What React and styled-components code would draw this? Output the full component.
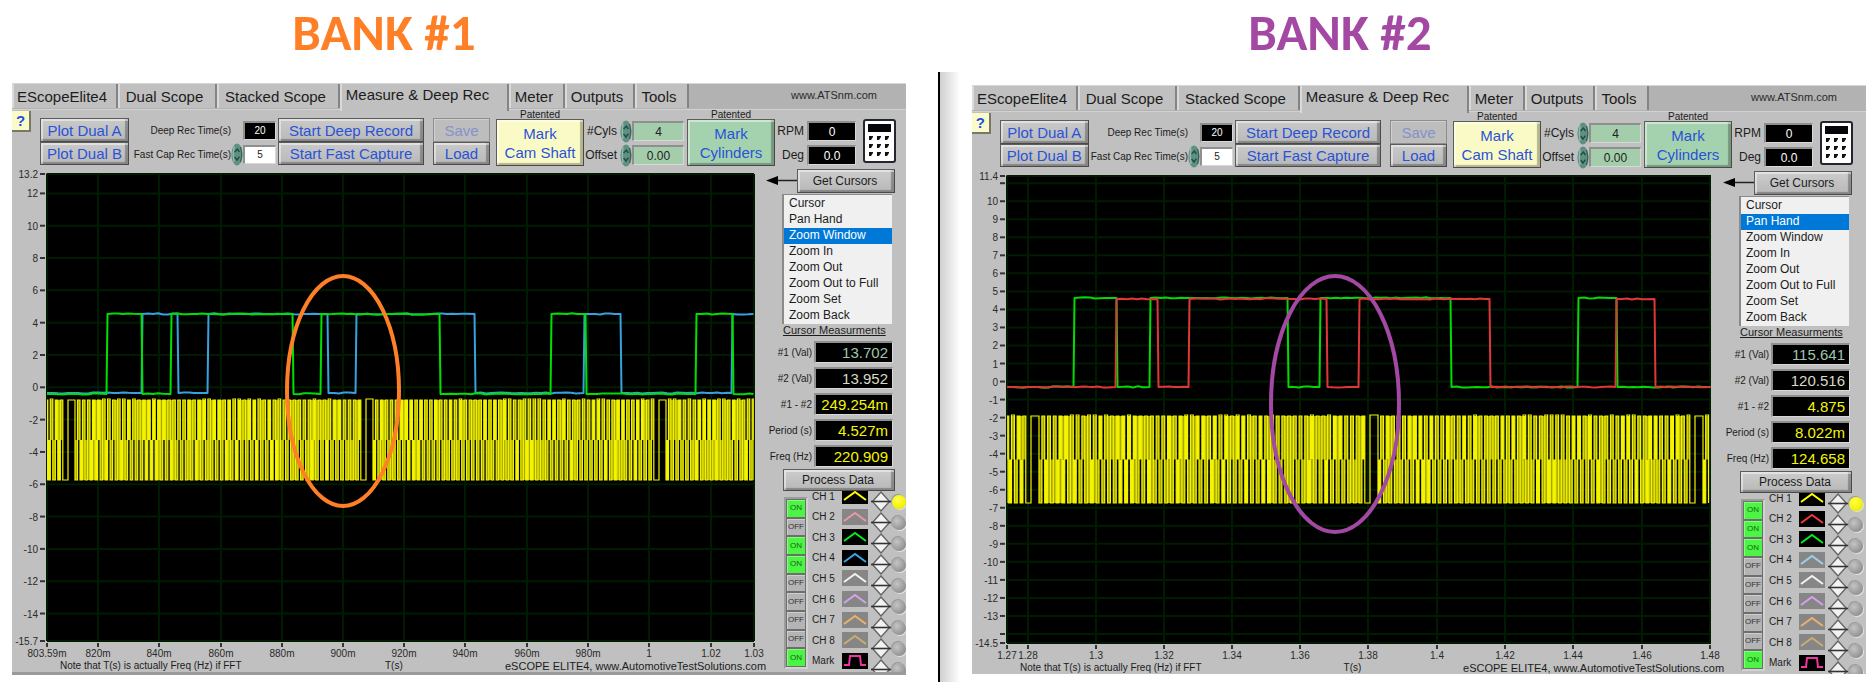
import React, { useId, useState } from "react";
import styled, { createGlobalStyle, css } from "styled-components";

const GlobalStyle = createGlobalStyle`
  * { box-sizing: border-box; }
  body {
    margin: 0;
    background: #fff;
    color: #1c1c1c;
    font-family: "Liberation Sans", Arial, sans-serif;
  }
  button, input, select { font-family: inherit; margin: 0; }
`;

/* ---------- page ---------- */

const Page = styled.main`
  display: flex;
  min-height: 100vh;
  padding: 0 8px 0 12px;
`;

const Bank = styled.section`
  flex: 1 1 0;
  min-width: 0;
`;

const Divider = styled.div`
  flex: 0 0 34px;
  margin: 72px 0 0 32px;
  border-left: 2px solid #000;
  background: linear-gradient(90deg, #cfcfcf, #fff 20px);
`;

const Title = styled.h1`
  margin: 0;
  padding: 6px ${(p) => p.$right}px 0 0;
  height: ${(p) => p.$height}px;
  font: 900 51px/54px Carlito, Calibri, Lato, sans-serif;
  text-align: center;
  white-space: nowrap;
  color: ${(p) => p.$color};
`;

const Panel = styled.div`
  overflow: hidden;
  background: #c0c0c0;
  border-bottom: ${(p) => (p.$edge ? "3px solid #9a9a9a" : "0")};
`;

/* ---------- tabs ---------- */

const TabBar = styled.nav`
  display: flex;
  align-items: flex-start;
  height: 27px;
  background: linear-gradient(#b2b2b2 25px, #d2d2d2 25px);
  border-top: 1px solid #d6d6d6;
`;

const Tab = styled.button`
  height: ${(p) => (p.$active ? 27 : 24)}px;
  padding: ${(p) => (p.$active ? "0 16px 6px 2px" : "0 8px 0 2px")};
  border: 0;
  border-left: 2px solid #dadada;
  border-right: 2px solid #848484;
  background: #c0c0c0;
  color: #1c1c1c;
  font-size: 15px;
  white-space: nowrap;
  flex: 0 0 ${(p) => p.$width}px;
`;

const SiteLink = styled.a`
  margin: 5px 29px 0 auto;
  font-size: 11px;
  line-height: 12px;
  color: #2a2a2a;
  text-decoration: none;
`;

/* ---------- toolbar ---------- */

const Toolbar = styled.div`
  display: flex;
  align-items: flex-start;
  height: 59px;
  padding-right: ${(p) => 10 + p.$inset}px;
`;

const raised = css`
  border: 1px solid #5c5c5c;
  border-right-color: #4a4a4a;
  border-bottom-color: #4a4a4a;
  box-shadow: inset 2px 2px 0 rgba(255, 255, 255, 0.45), inset -3px -2px 1px rgba(0, 0, 0, 0.28);
`;

const HelpButton = styled.button`
  width: 19px;
  height: 21px;
  margin-top: 1px;
  padding: 0;
  border: solid #77776a;
  border-width: 0 2px 2px 0;
  background: #fbfbc8;
  color: #1f4fe0;
  font-size: 15px;
  font-weight: 700;
`;

const Stack = styled.div`
  display: grid;
  grid-template-rows: 24px 23px;
  flex: 0 0 ${(p) => p.$width}px;
  margin: 8px 0 0 ${(p) => p.$gap}px;
`;

const BlueButton = styled.button`
  ${raised}
  padding: 0;
  background: linear-gradient(#c9c9c9, #b9b9b9);
  color: #2953d6;
  font-size: 15px;
  white-space: nowrap;
  &:disabled {
    color: #8593c9;
    background: #bdbdbd;
    border-color: #8d8d8d;
    box-shadow: inset 1px 1px 0 #d0d0d0;
  }
`;

const MarkGroup = styled.div`
  flex: 0 0 88px;
  margin-left: ${(p) => p.$gap}px;
  text-align: center;
  font-size: 10px;
  line-height: 9px;
`;

const MarkButton = styled.button`
  ${raised}
  display: block;
  width: 100%;
  height: 47px;
  padding: 0;
  background: ${(p) => p.$color};
  color: #2953d6;
  font-size: 15px;
  line-height: 19px;
`;

const Settings = styled.div`
  display: grid;
  grid-template-columns: ${(p) => p.$columns};
  grid-template-rows: 24px 24px;
  align-items: center;
  justify-items: end;
  flex: ${(p) => (p.$width ? `0 0 ${p.$width}px` : "1 1 0")};
  margin: ${(p) => p.$top}px 0 0 2px;
  font-size: ${(p) => p.$size}px;
  white-space: nowrap;
`;

const Field = styled.input`
  width: ${(p) => p.$width}px;
  height: ${(p) => p.$height || 20}px;
  padding: 0;
  border: solid;
  border-width: 2px 1px 1px 2px;
  border-color: #8f8f8f #d8d8d8 #d8d8d8 #8f8f8f;
  background: ${(p) => p.$bg};
  color: ${(p) => p.$color};
  font-size: ${(p) => p.$size || 12}px;
  text-align: center;
`;

const SpinButton = styled.button`
  display: block;
  width: 12px;
  height: 23px;
  padding: 0;
  border: 0;
  background: none;
`;

const CalcButton = styled.button`
  flex: 0 0 33px;
  height: 44px;
  margin: 9px 0 0 7px;
  padding: 0;
  border: 0;
  background: none;
  svg { display: block; }
`;

function Spinner({ label }) {
  return (
    <SpinButton type="button" aria-label={label}>
      <svg width="12" height="23" viewBox="0 0 12 23">
        <ellipse cx="6" cy="11.5" rx="5.6" ry="11" fill="#5f9183" />
        <path d="M3 3 Q1.5 11 3 19" stroke="#93b9ab" strokeWidth="1.4" fill="none" />
        <path d="M3.6 9 L6.4 6 L8.4 9 M3.6 14 L6 17 L8.4 13.6" stroke="#234a40" strokeWidth="1.4" fill="none" />
        <path d="M9.6 4 Q12 11 9.6 19" stroke="#2f5a4e" strokeWidth="1" fill="none" />
      </svg>
    </SpinButton>
  );
}

function Calculator() {
  const keys = [0, 1, 2].flatMap((r) => [0, 1, 2].map((c) => [6 + c * 8, 17 + r * 8]));
  return (
    <svg width="33" height="44" viewBox="0 0 33 44">
      <rect x="1" y="1" width="31" height="42" rx="2" fill="#fff" stroke="#23262e" strokeWidth="2" />
      <rect x="5" y="5" width="23" height="8" fill="#05060a" />
      {keys.map(([x, y]) => (
        <path key={`${x}-${y}`} d={`M${x} ${y}h4v1l-2 3h-2z`} fill="#111" />
      ))}
    </svg>
  );
}

/* ---------- chart ---------- */

const Body = styled.div`
  display: flex;
  padding-right: ${(p) => p.$inset}px;
  height: ${(p) => p.$height}px;
`;

const ChartColumn = styled.div`
  flex: 1 1 0;
  min-width: 0;
  padding: 5px 0 0 35px;
`;

const Plot = styled.svg`
  display: block;
  width: 100%;
  height: 467px;
  overflow: visible;
  font-size: 10px;
  fill: #2a2a2a;
`;

const Caption = styled.div`
  display: grid;
  grid-template-columns: minmax(0, 325fr) minmax(0, 120fr) minmax(0, 249fr);
  align-items: center;
  padding: 19px 0 0 13px;
  font-size: 10px;
  line-height: 12px;
  white-space: nowrap;
`;

const CaptionLink = styled.a`
  font-size: 11px;
  color: #1c1c1c;
  text-decoration: none;
`;

const noise = (n) => {
  const v = Math.sin(n * 12.9898) * 43758.5453;
  return v - Math.floor(v);
};

/* Square trace that starts low and toggles at each edge. */
function squarePath(edges, low, high, end) {
  let x = 0;
  let up = false;
  let d = `M0 ${low}`;
  [...edges, end].forEach((edge, i) => {
    const level = up ? high : low;
    for (let px = x + 6; px < edge - 4; px += 5) {
      d += `L${px} ${(level + (noise(px + i) - 0.6) * 1.2).toFixed(1)}`;
    }
    d += `L${edge - 0.5} ${level}`;
    up = !up;
    if (i < edges.length) d += `L${edge + 0.5} ${up ? high : low}`;
    x = edge;
  });
  return d;
}

/* Crank wheel trace: a wide tooth followed by 57 short ones, over and over. */
function crankTeeth(gaps, wide, end) {
  const teeth = [];
  const spans = [[gaps[0] - (gaps[1] - gaps[0]), gaps[0]]];
  gaps.forEach((g, i) => spans.push([g, gaps[i + 1] ?? g + (g - gaps[i - 1])]));
  spans.forEach(([from, to]) => {
    teeth.push([from, from + wide, true]);
    const first = from + wide;
    const pitch = (to - 5.2 - first) / 57;
    for (let k = 0; k < 57; k += 1) teeth.push([first + (k + 0.5) * pitch, first + (k + 1) * pitch, false]);
  });
  return teeth.filter((t) => t[1] > 0 && t[0] < end);
}

function Crank({ gaps, wide, high, low, end }) {
  const teeth = crankTeeth(gaps, wide, end);
  const mid = (high + low) / 2;
  let line = "";
  let fill = "";
  let bright = "";
  const block = (a, b, top, bottom) => `M${a.toFixed(1)} ${top}H${b.toFixed(1)}V${bottom}H${a.toFixed(1)}Z`;
  teeth.forEach(([a, b, isWide], i) => {
    const x0 = Math.max(a, 0);
    const x1 = Math.min(b, end);
    const top = high + (noise(i) > 0.7 ? -1 : 0);
    line += `${i ? "L" : "M"}${x0.toFixed(1)} ${low}V${top}H${x1.toFixed(1)}V${low}`;
    if (!isWide) {
      const upper = block(x0, x1, high, mid);
      if (noise(i + 300) > 0.72) bright += upper;
      else fill += upper;
      if (noise(i + 500) > 0.68) fill += block(x0, x1, mid, low);
    }
    const next = teeth[i + 1];
    if (next && !next[2]) {
      const lower = block(x1, next[0], mid, low);
      if (noise(i + 700) > 0.72) bright += lower;
      else fill += lower;
      if (!isWide && noise(i + 900) > 0.62) fill += block(x1, next[0], high, mid);
    }
  });
  return (
    <g>
      <path d={fill} fill="#a8a800" />
      <path d={bright} fill="#f4f400" />
      <path d={line} fill="none" stroke="#f4f400" strokeWidth="1.2" />
    </g>
  );
}

const pct = (v) => `${(v * 100).toFixed(3)}%`;

function Chart({ chart }) {
  const { yMax, yMin, yTicks, xTicks, traces, crank, ring, width } = chart;
  const yAt = (v) => pct((yMax - v) / (yMax - yMin));
  return (
    <Plot role="img" aria-label="Oscilloscope traces">
      <rect x="-1" y="-1" width="100%" height="100%" fill="#666" />
      <rect width="100%" height="100%" fill="#000" />
      {yTicks.map(([v]) => (
        <line key={v} x1="0" x2="100%" y1={yAt(v)} y2={yAt(v)} stroke="#001b00" strokeWidth="2" />
      ))}
      {xTicks.map(([px, label]) => (
        <line key={label} x1={pct(px / width)} x2={pct(px / width)} y1="0" y2="100%" stroke="#001b00" strokeWidth="2" />
      ))}
      {yTicks.map(([v, label]) => (
        <svg key={v} y={yAt(v)} overflow="visible">
          <line x1="-7" x2="-2" y1="0" y2="0" stroke="#333" strokeWidth="2" />
          <text x="-9" y="4" textAnchor="end">{label}</text>
        </svg>
      ))}
      {xTicks.map(([px, label]) => (
        <svg key={label} x={pct(px / width)} y="100%" overflow="visible">
          <line x1="0" x2="0" y1="2" y2="6" stroke="#333" strokeWidth="2" />
          <text x="0" y="16" textAnchor="middle">{label}</text>
        </svg>
      ))}
      <svg width="100%" height="100%" viewBox={`0 0 ${width} 467`} preserveAspectRatio="none">
        {traces.map((t) => (
          <path
            key={t.color}
            d={squarePath(t.edges, t.low, t.high, width)}
            fill="none"
            stroke={t.color}
            strokeWidth="2"
            strokeLinejoin="round"
          />
        ))}
        <Crank {...crank} end={width} />
        <ellipse {...ring} fill="none" strokeWidth="4" />
      </svg>
    </Plot>
  );
}

/* ---------- side column ---------- */

const Side = styled.aside`
  flex: 0 0 152px;
`;

const CursorRow = styled.div`
  display: flex;
  align-items: center;
  padding-left: 12px;
  svg { display: block; }
`;

const GrayButton = styled.button`
  ${raised}
  position: relative;
  display: block;
  width: ${(p) => p.$width}px;
  height: ${(p) => p.$height}px;
  margin-left: ${(p) => p.$left || 0}px;
  padding: 0 2px 0 0;
  background: linear-gradient(#cccccc, #b8b8b8);
  color: #1c1c1c;
  font-size: 12px;
  z-index: 1;
`;

const ModeList = styled.select`
  appearance: none;
  display: block;
  width: 110px;
  height: 130px;
  margin: 1px 0 0 28px;
  padding: 1px 0 0;
  overflow: hidden;
  border: solid #8a8a8a;
  border-width: 1px 0 0 2px;
  border-radius: 0;
  outline: 0;
  background: #f0f0f0;
  color: #1c1c1c;
  font-size: 12px;
  option {
    height: 16px;
    min-height: 16px;
    padding: 0 5px;
    line-height: 16px;
  }
  option:checked {
    background: #0078d7 linear-gradient(#0078d7, #0078d7);
    color: #fff;
    -webkit-text-fill-color: #fff;
  }
`;

const SideTitle = styled.h2`
  margin: 0 0 3px 29px;
  font-size: 11px;
  line-height: 12px;
  font-weight: 400;
  text-decoration: underline;
  white-space: nowrap;
`;

const Readout = styled.div`
  display: grid;
  grid-template-columns: 58px 79px;
  column-gap: 2px;
  align-items: center;
  height: 26px;
  font-size: 10px;
  label { justify-self: end; }
`;

const ReadoutField = styled.input`
  width: 79px;
  height: 22px;
  padding: 0 4px 0 0;
  border: solid;
  border-width: 2px 1px 1px 2px;
  border-color: #8f8f8f #d8d8d8 #d8d8d8 #8f8f8f;
  background: #000;
  color: ${(p) => p.$color};
  font-size: 15px;
  text-align: right;
`;

const Channels = styled.div`
  display: flex;
  align-items: flex-start;
  padding-left: 30px;
`;

const Toggles = styled.div`
  display: grid;
  grid-template-rows: repeat(9, 1fr);
  width: 24px;
  height: 172px;
  margin-top: 6px;
  border: 2px solid #9c9c9c;
  border-right-color: #d2d2d2;
  border-bottom-color: #d2d2d2;
`;

const Toggle = styled.button`
  padding: 0;
  border: 1px solid #6e6e6e;
  box-shadow: inset 1px 1px 0 rgba(255, 255, 255, 0.35);
  background: ${(p) => (p.$on ? "#4cf443" : "#b4b4b4")};
  color: ${(p) => (p.$on ? "#17641a" : "#333")};
  font-size: 8px;
  line-height: 10px;
`;

const ChannelNames = styled.div`
  display: grid;
  grid-template: repeat(9, 1fr) / 30px 26px;
  align-items: center;
  height: 185px;
  margin: -5px 0 0 4px;
  font-size: 10px;
  svg { display: block; }
`;

const ChannelPickers = styled.div`
  display: grid;
  grid-template: repeat(9, 1fr) / 20px 15px;
  align-items: center;
  height: 185px;
  margin-left: 3px;
  svg { display: block; }
`;

const NudgeButton = styled.button`
  width: 20px;
  height: 21px;
  padding: 0;
  border: 0;
  background: none;
`;

const Led = styled.input.attrs({ type: "radio" })`
  appearance: none;
  width: 14px;
  height: 14px;
  margin: 0 0 0 1px;
  border-radius: 50%;
  background: radial-gradient(circle at 35% 35%, #c4c4c4, #7e7e7e);
  box-shadow: 1px 1px 0 #e2e2e2, -1px -1px 0 #999;
  &:checked { background: radial-gradient(circle at 40% 35%, #ffff4a, #f0f000 70%, #c4c400); }
`;

function WaveIcon({ color, on, pulse }) {
  return (
    <svg width="26" height="16" viewBox="0 0 26 16">
      <rect width="26" height="16" fill={on ? "#000" : "#868686"} />
      <path
        d={pulse ? "M2 12H7L8 3H18L19 12H24" : "M2 12L13 4L24 12"}
        fill="none"
        stroke={color}
        strokeWidth="2"
      />
    </svg>
  );
}

function NudgeIcon() {
  return (
    <svg width="20" height="21" viewBox="0 0 20 21">
      <path d="M10 1L18.500 10.500L10 20L1.500 10.500Z" fill="#f2f2f2" stroke="#666" strokeWidth="1.400" />
      <path d="M0 10.500H20" stroke="#333" strokeWidth="1.600" />
    </svg>
  );
}

/* ---------- data ---------- */

const TABS = [
  ["EScopeElite4", 106],
  ["Dual Scope", 99],
  ["Stacked Scope", 123],
  ["Measure & Deep Rec", 169],
  ["Meter", 56],
  ["Outputs", 70],
  ["Tools", 54],
];

const MODES = ["Cursor", "Pan Hand", "Zoom Window", "Zoom In", "Zoom Out", "Zoom Out to Full", "Zoom Set", "Zoom Back"];
const READOUTS = [
  ["#1 (Val)", "#9fc5ae"],
  ["#2 (Val)", "#d9d9c4"],
  ["#1 - #2", "#f5f500"],
  ["Period (s)", "#f5f500"],
  ["Freq (Hz)", "#f5f500"],
];
const CHANNELS = ["CH 1", "CH 2", "CH 3", "CH 4", "CH 5", "CH 6", "CH 7", "CH 8", "Mark"];

const range = (from, to, step) => {
  const out = [];
  for (let v = from; v >= to; v -= step) out.push(v);
  return out;
};

const BANK_1 = {
  title: "BANK #1",
  color: "#ff7f27",
  mode: "Zoom Window",
  values: ["13.702", "13.952", "249.254m", "4.527m", "220.909"],
  on: [true, false, true, true, false, false, false, false, true],
  colors: ["#ffff00", "#e89aa0", "#00f01c", "#3aa5ea", "#f2f2f2", "#d6a2ee", "#efb06c", "#c9ad72", "#f0359c"],
  chart: {
    width: 707,
    yMax: 13.2,
    yMin: -15.7,
    yTicks: [[13.2, "13.2"], ...range(12, -14, 2).map((v) => [v, String(v)]), [-15.7, "-15.7"]],
    xTicks: [
      [0, "803.59m"], [51, "820m"], [112, "840m"], [174, "860m"], [235, "880m"], [296, "900m"], [357, "920m"],
      [418, "940m"], [480, "960m"], [541, "980m"], [602, "1"], [664, "1.02"], [707, "1.03"],
    ],
    traces: [
      { color: "#36a3e0", low: 219, high: 140, edges: [95, 131, 161, 281, 309, 428, 537, 574, 685] },
      { color: "#00e000", low: 220, high: 140, edges: [60, 95, 124, 246, 274, 393, 504, 539, 649, 686] },
    ],
    crank: { gaps: [21, 319, 612], wide: 7, high: 226, low: 306 },
    ring: { cx: 296, cy: 217, rx: 56, ry: 115, stroke: "#ff7f27" },
  },
};

const BANK_2 = {
  title: "BANK #2",
  color: "#a349a4",
  mode: "Pan Hand",
  values: ["115.641", "120.516", "4.875", "8.022m", "124.658"],
  on: [true, true, true, false, false, false, false, false, true],
  colors: ["#ffff00", "#f03a3a", "#00f01c", "#9cd2ee", "#f2f2f2", "#d6a2ee", "#efb06c", "#c9ad72", "#f0359c"],
  chart: {
    width: 704,
    yMax: 11.4,
    yMin: -14.5,
    yTicks: [
      [11.4, "11.4"], [11, ""], ...range(10, -13, 1).map((v) => [v, String(v)]), [-14, ""], [-14.5, "-14.5"],
    ],
    xTicks: [
      [0, "1.27"], [21, "1.28"], [89, "1.3"], [157, "1.32"], [225, "1.34"], [293, "1.36"], [361, "1.38"],
      [430, "1.4"], [498, "1.42"], [566, "1.44"], [635, "1.46"], [703, "1.48"],
    ],
    traces: [
      { color: "#00dc00", low: 211, high: 122, edges: [67, 110, 143, 281, 313, 444, 571, 610] },
      { color: "#e03838", low: 211, high: 123, edges: [109, 151, 182, 320, 352, 483, 609, 648] },
    ],
    crank: { gaps: [24, 363, 688], wide: 8, high: 240, low: 327 },
    ring: { cx: 328, cy: 228, rx: 64, ry: 128, stroke: "#a349a4" },
  },
};

function ScopePanel({ bank, inset, bodyHeight, edge }) {
  const id = useId();
  const [mode, setMode] = useState(bank.mode);
  const [on, setOn] = useState(bank.on);
  return (
    <Panel $edge={edge}>
      <TabBar role="tablist">
        {TABS.map(([name, width], i) => (
          <Tab key={name} type="button" role="tab" aria-selected={i === 3} $active={i === 3} $width={width}>
            {name}
          </Tab>
        ))}
        <SiteLink href="#site">www.ATSnm.com</SiteLink>
      </TabBar>

      <Toolbar $inset={inset}>
        <HelpButton type="button">?</HelpButton>
        <Stack $width={89} $gap={9}>
          <BlueButton type="button">Plot Dual A</BlueButton>
          <BlueButton type="button">Plot Dual B</BlueButton>
        </Stack>
        <Settings $columns="1fr 12px 33px" $top={8} $size={10}>
          <label htmlFor={`${id}deep`}>Deep Rec Time(s)</label>
          <span />
          <Field id={`${id}deep`} defaultValue="20" $width={33} $height={19} $bg="#000" $color="#fff" $size={10} />
          <label htmlFor={`${id}fast`}>Fast Cap Rec Time(s)</label>
          <Spinner label="Change fast capture time" />
          <Field id={`${id}fast`} defaultValue="5" $width={33} $height={19} $bg="#fff" $color="#222" $size={10} />
        </Settings>
        <Stack $width={146} $gap={2}>
          <BlueButton type="button">Start Deep Record</BlueButton>
          <BlueButton type="button">Start Fast Capture</BlueButton>
        </Stack>
        <Stack $width={57} $gap={9}>
          <BlueButton type="button" disabled>Save</BlueButton>
          <BlueButton type="button">Load</BlueButton>
        </Stack>
        <MarkGroup $gap={6}>
          Patented
          <MarkButton type="button" $color="#fafac6">Mark<br />Cam Shaft</MarkButton>
        </MarkGroup>
        <Settings $columns="31px 15px 52px" $width={98} $top={9} $size={12}>
          <label htmlFor={`${id}cyls`}>#Cyls</label>
          <Spinner label="Change cylinder count" />
          <Field id={`${id}cyls`} defaultValue="4" $width={52} $bg="#a4ceab" $color="#222" />
          <label htmlFor={`${id}offset`}>Offset</label>
          <Spinner label="Change offset" />
          <Field id={`${id}offset`} defaultValue="0.00" $width={52} $bg="#a4ceab" $color="#222" />
        </Settings>
        <MarkGroup $gap={3}>
          Patented
          <MarkButton type="button" $color="#a4d2ae">Mark<br />Cylinders</MarkButton>
        </MarkGroup>
        <Settings $columns="27px 52px" $width={79} $top={9} $size={12}>
          <label htmlFor={`${id}rpm`}>RPM</label>
          <Field id={`${id}rpm`} defaultValue="0" $width={49} $bg="#000" $color="#fff" />
          <label htmlFor={`${id}deg`}>Deg</label>
          <Field id={`${id}deg`} defaultValue="0.0" $width={49} $bg="#000" $color="#fff" />
        </Settings>
        <CalcButton type="button" aria-label="Calculator"><Calculator /></CalcButton>
      </Toolbar>

      <Body $inset={inset} $height={bodyHeight}>
        <ChartColumn>
          <Chart chart={bank.chart} />
          <Caption>
            <span>Note that T(s) is actually Freq (Hz) if FFT</span>
            <span>T(s)</span>
            <CaptionLink href="#solutions">eSCOPE ELITE4, www.AutomotiveTestSolutions.com</CaptionLink>
          </Caption>
        </ChartColumn>

        <Side>
          <CursorRow>
            <svg width="31" height="12" viewBox="0 0 31 12">
              <path d="M10 5.500H31" stroke="#222" strokeWidth="1.500" />
              <path d="M0 5.500L12 1V10Z" fill="#000" />
            </svg>
            <GrayButton type="button" $width={98} $height={24}>Get Cursors</GrayButton>
          </CursorRow>
          <ModeList size={8} aria-label="Cursor mode" value={mode} onChange={(e) => setMode(e.target.value)}>
            {MODES.map((m) => <option key={m}>{m}</option>)}
          </ModeList>
          <SideTitle>Cursor Measurments</SideTitle>
          {READOUTS.map(([name, color], i) => (
            <Readout key={name}>
              <label htmlFor={`${id}r${i}`}>{name}</label>
              <ReadoutField id={`${id}r${i}`} readOnly value={bank.values[i]} $color={color} />
            </Readout>
          ))}
          <GrayButton type="button" $width={112} $height={22} $left={29}>Process Data</GrayButton>
          <Channels>
            <Toggles>
              {CHANNELS.map((name, i) => (
                <Toggle
                  key={name}
                  type="button"
                  aria-pressed={on[i]}
                  $on={on[i]}
                  onClick={() => setOn(on.map((v, k) => (k === i ? !v : v)))}
                >
                  {on[i] ? "ON" : "OFF"}
                </Toggle>
              ))}
            </Toggles>
            <ChannelNames>
              {CHANNELS.map((name, i) => (
                <React.Fragment key={name}>
                  <label htmlFor={`${id}c${i}`}>{name}</label>
                  <WaveIcon color={bank.colors[i]} on={on[i]} pulse={i === 8} />
                </React.Fragment>
              ))}
            </ChannelNames>
            <ChannelPickers>
              {CHANNELS.map((name, i) => (
                <React.Fragment key={name}>
                  <NudgeButton type="button" aria-label={`Move ${name}`}><NudgeIcon /></NudgeButton>
                  <Led id={`${id}c${i}`} name={`${id}channel`} defaultChecked={i === 0} />
                </React.Fragment>
              ))}
            </ChannelPickers>
          </Channels>
        </Side>
      </Body>
    </Panel>
  );
}

export default function App() {
  return (
    <>
      <GlobalStyle />
      <Page>
        <Bank>
          <Title $color={BANK_1.color} $height={83} $right={150}>{BANK_1.title}</Title>
          <ScopePanel bank={BANK_1} inset={0} bodyHeight={503} edge />
        </Bank>
        <Divider />
        <Bank>
          <Title $color={BANK_2.color} $height={85} $right={158}>{BANK_2.title}</Title>
          <ScopePanel bank={BANK_2} inset={3} bodyHeight={503} />
        </Bank>
      </Page>
    </>
  );
}
